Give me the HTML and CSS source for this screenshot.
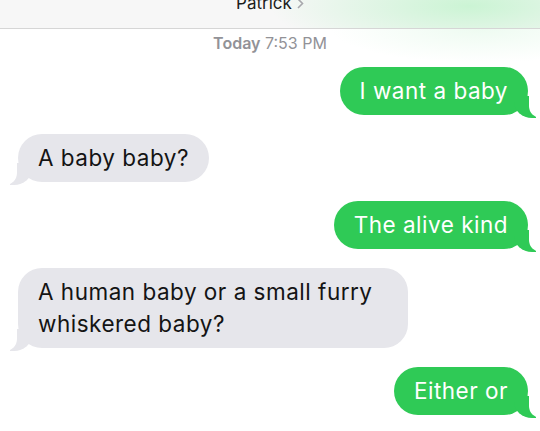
FILE: index.html
```html
<!DOCTYPE html>
<html lang="en">
  <head>
    <meta charset="UTF-8" />
    <meta name="viewport" content="width=device-width, initial-scale=1.0" />
    <title>Patrick</title>
    <link rel="stylesheet" href="styles.css">
  </head>
  <body>
    <div class="screen">
      <!-- top bar, cut off at the top -->
      <header class="nav">
        <span class="contact">
          Patrick
          <svg class="chev" width="7" height="11" viewBox="0 0 7 11">
            <polyline points="1,1 5.5,5.5 1,10" fill="none" stroke="#a8a8ad" stroke-width="1.6" />
          </svg>
        </span>
      </header>

      <p class="stamp"><b>Today</b> 7:53 PM</p>

      <!-- conversation -->
      <div class="thread">
        <p class="bubble sent">I want a baby</p>
        <p class="bubble got">A baby baby?</p>
        <p class="bubble sent">The alive kind</p>
        <p class="bubble got">A human baby or a small furry whiskered baby?</p>
        <p class="bubble sent">Either or</p>
      </div>
    </div>
  </body>
</html>
```

FILE: styles.css
```css
body {
  margin: 0;
  padding: 0;
  font-family: Inter, "Liberation Sans", sans-serif;
  background-color: #fff;
  overflow: hidden;
}

.screen {
  width: 540px;
  height: 431px;
  background: radial-gradient(ellipse 150px 35px at 480px 28px, rgba(205, 244, 214, 0.35), rgba(255, 255, 255, 0));
}

/* top bar */
.nav {
  height: 28px;
  display: flex;
  justify-content: center;
  align-items: flex-end;
  overflow: hidden;
  border-bottom: 1px solid #d6d6d6;
  background:
    radial-gradient(ellipse 200px 50px at 470px 6px, #cbf4d4, rgba(247, 247, 247, 0)),
    #f7f7f7;
}

.contact {
  font-size: 17px;
  line-height: 17px;
  color: #1c1c1c;
  margin-bottom: 16px;
  display: flex;
  align-items: center;
  gap: 5px;
}

.stamp {
  margin: 5px 0 0;
  text-align: center;
  font-size: 16px;
  line-height: 18px;
  color: #929297;
}

.stamp b {
  font-weight: 600;
}

/* bubbles */
.thread {
  display: flex;
  flex-direction: column;
  gap: 19px;
  padding: 15px 12px 0 18px;
}

.bubble {
  position: relative;
  margin: 0;
  max-width: 350px;
  padding: 8px 20px;
  font-size: 22.5px;
  letter-spacing: 0.5px;
  line-height: 32px;
  border-radius: 24px;
}

.sent {
  align-self: flex-end;
  background: #2fca56;
  color: #fff;
}

.got {
  align-self: flex-start;
  background: #e6e6eb;
  color: #141414;
}

/* tails */
.bubble::before,
.bubble::after {
  content: "";
  position: absolute;
  bottom: -3px;
  height: 22px;
}

.sent::before {
  right: -8px;
  border-right: 22px solid #2fca56;
  border-bottom-left-radius: 18px 16px;
}

.sent::after {
  right: -14px;
  width: 13px;
  background: #fff;
  border-bottom-left-radius: 12px;
}

.got::before {
  left: -8px;
  border-left: 22px solid #e6e6eb;
  border-bottom-right-radius: 18px 16px;
}

.got::after {
  left: -14px;
  width: 13px;
  background: #fff;
  border-bottom-right-radius: 12px;
}
```
